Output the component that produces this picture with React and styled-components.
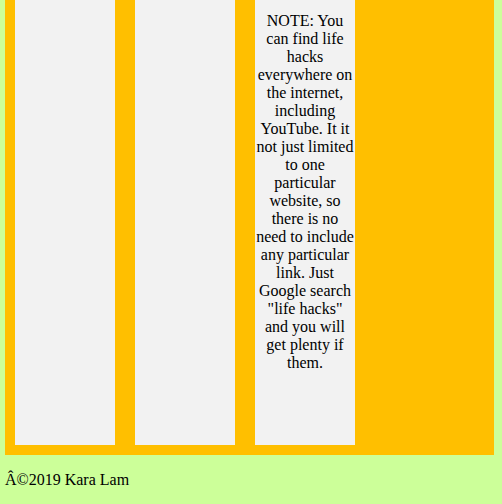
import styled, { createGlobalStyle } from "styled-components";

const GlobalStyle = createGlobalStyle`
    html, body {
        margin: 0;
        padding: 0;
        background: #ccff99;
        font-family: "Liberation Serif", "Times New Roman", serif;
        font-size: 16px;
        color: #000;
    }
`;

const Page = styled.div`
    padding: 0 8px 0 5px;
`;

const Panel = styled.div`
    background: #ffbf00;
    display: flex;
    gap: 20px;
    padding: 0 10px 10px;
`;

const Column = styled.div`
    width: 100px;
    height: 445px;
    background: #f2f2f2;
    text-align: center;
    line-height: 18px;
    padding-top: 12px;
    box-sizing: border-box;
`;

const Footer = styled.p`
    margin: 16px 0 0;
    line-height: 18.4px;
`;

const App = () => {
    return (
        <Page>
            <GlobalStyle />
            <Panel>
                <Column />
                <Column />
                <Column>
                    NOTE: You can find life hacks everywhere on the internet,
                    including YouTube. It it not just limited to one particular
                    website, so there is no need to include any particular link.
                    Just Google search "life hacks" and you will get plenty if
                    them.
                </Column>
            </Panel>
            <Footer>Â©2019 Kara Lam</Footer>
        </Page>
    );
};

export default App;
